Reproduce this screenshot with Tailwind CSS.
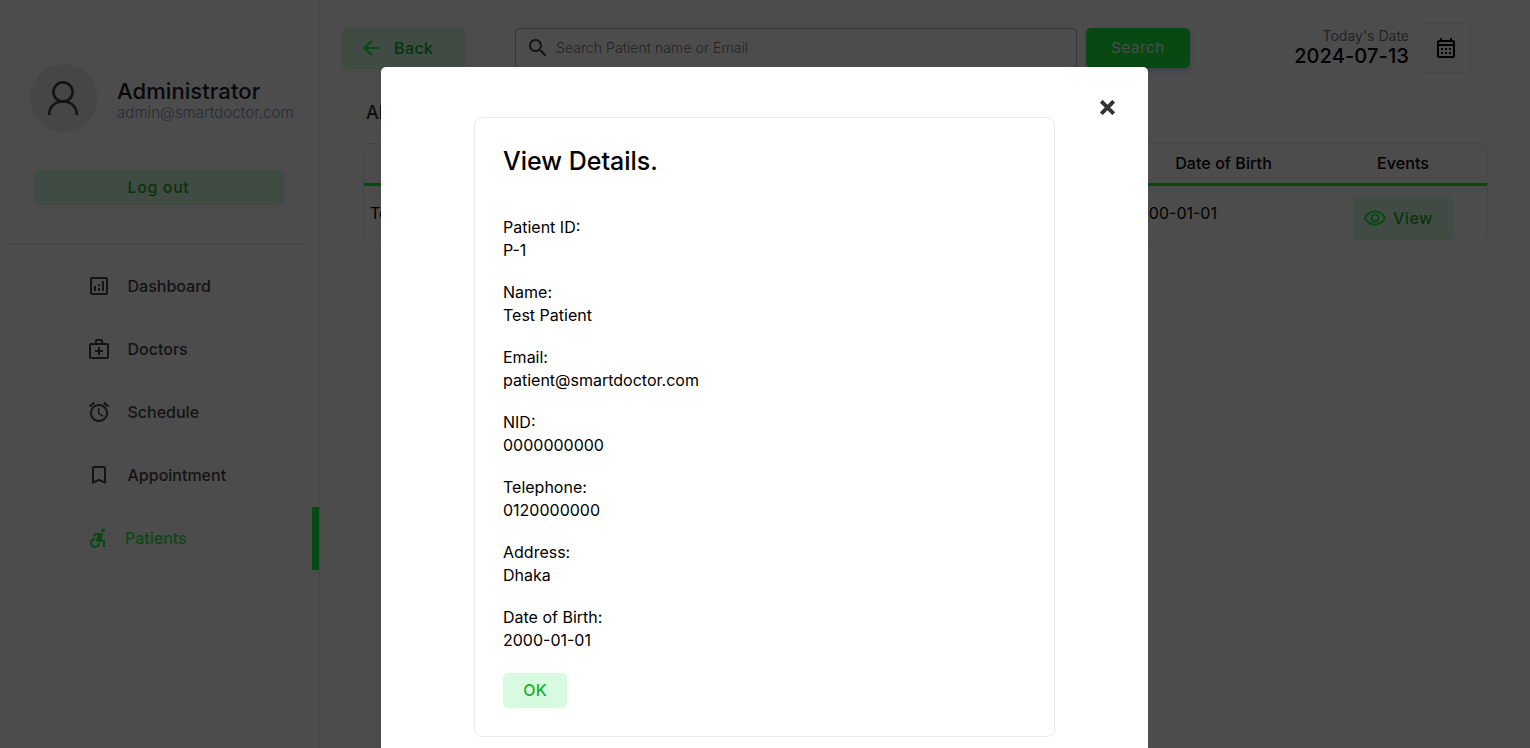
<!DOCTYPE html>
<html lang="en">
<head>
<meta charset="utf-8">
<title>Patients</title>
<script src="https://cdn.jsdelivr.net/npm/@tailwindcss/browser@4"></script>
</head>
<body class="relative h-[748px] w-[1530px] overflow-hidden bg-white font-['Inter','Liberation_Sans',sans-serif] text-base text-black">
<div class="flex h-full">
  <aside class="flex w-[320px] shrink-0 flex-col border-r border-[#ebebeb]">
    <div class="mt-16 ml-[30px] flex h-[68px] items-center">
      <div class="flex h-[68px] w-[67px] shrink-0 items-center justify-center rounded-full bg-[#ebebeb]">
        <svg class="mr-px h-[36px] w-[32px]" viewBox="0 0 32 36" fill="none" stroke="#444" stroke-width="2.6"><circle cx="16" cy="12" r="9.6"/><path d="M2.300 35v-1.200a13.700 12.400 0 0 1 27.400 0V35"/></svg>
      </div>
      <div class="ml-5 flex flex-col pt-[5px]">
        <div class="text-[22px] leading-[24px] font-medium tracking-[0.08px] text-[#161c2d]">Administrator</div>
        <div class="text-[15px] leading-[19px] font-light tracking-[0.08px] text-[#8492a6]">admin@smartdoctor.com</div>
      </div>
    </div>
    <div class="mt-[38px] ml-[33px] flex h-[35px] w-[251px] items-center justify-center rounded-[5px] bg-[#d8fae0] pb-[2px] font-medium tracking-[0.6px] text-[#1bb02a]">Log out</div>
    <div class="mx-2 mt-[39px] mr-[10px] h-px bg-[#ebebeb]"></div>
    <nav class="mt-[9px] flex flex-col font-medium text-[#444]">
      <div class="flex h-[63px] items-center pl-[87px]"><svg class="mr-[16.5px] size-6" viewBox="0 0 24 24" fill="currentColor"><path d="M19 3H5c-1.1 0-2 .9-2 2v14c0 1.100.9 2 2 2h14c1.100 0 2-.9 2-2V5c0-1.100-.9-2-2-2zm0 16H5V5h14v14zM7 12h2v5H7zM15 7h2v10h-2zM11 14h2v3h-2zM11 10h2v2h-2z"/></svg>Dashboard</div>
      <div class="flex h-[63px] items-center pl-[87px]"><svg class="mr-[16.5px] size-6" viewBox="0 0 24 24" fill="currentColor"><path d="M20 6h-4V4c0-1.100-.9-2-2-2h-4c-1.100 0-2 .9-2 2v2H4c-1.100 0-2 .9-2 2v12c0 1.100.9 2 2 2h16c1.100 0 2-.9 2-2V8c0-1.100-.9-2-2-2zM10 4h4v2h-4V4zm10 16H4V8h16v12zM13 10h-2v3H8v2h3v3h2v-3h3v-2h-3z"/></svg>Doctors</div>
      <div class="flex h-[63px] items-center pl-[87px]"><svg class="mr-[16.5px] size-6" viewBox="0 0 24 24" fill="currentColor"><path d="M22 5.720l-4.600-3.860-1.290 1.530 4.600 3.860L22 5.720zM7.880 3.390L6.600 1.860 2 5.710l1.290 1.530 4.590-3.850zM12.500 8H11v6l4.750 2.850.75-1.230-4-2.370V8zM12 4c-4.970 0-9 4.030-9 9s4.020 9 9 9c4.970 0 9-4.030 9-9s-4.030-9-9-9zm0 16c-3.870 0-7-3.130-7-7s3.130-7 7-7 7 3.130 7 7-3.130 7-7 7z"/></svg>Schedule</div>
      <div class="flex h-[63px] items-center pl-[87px]"><svg class="mr-[16.5px] size-6" viewBox="0 0 24 24" fill="currentColor"><path d="M17 3H7c-1.100 0-1.990.9-1.990 2L5 21l7-3 7 3V5c0-1.100-.9-2-2-2zm0 15l-5-2.180L7 18V5h10v13z"/></svg>Appointment</div>
      <div class="flex h-[64px] items-start text-[#18f040]">
        <div class="flex h-[63px] grow items-center pl-[85px]"><svg class="mr-[16px] size-6" viewBox="0 0 24 24" fill="currentColor"><circle cx="18" cy="4.540" r="2"/><path d="M15 17h-2c0 1.650-1.350 3-3 3s-3-1.350-3-3 1.350-3 3-3v-2c-2.760 0-5 2.240-5 5s2.240 5 5 5 5-2.240 5-5zm3-3.500h-1.860l1.670-3.670C18.420 8.500 17.440 7 15.960 7h-5.200c-.81 0-1.540.47-1.870 1.200L8.220 10l1.920.53.65-1.530H13l-1.830 4.100c-.6 1.330.39 2.900 1.850 2.900H18v5h2v-5.500c0-1.100-.9-2-2-2z"/></svg>Patients</div>
        <div class="mt-px h-[63px] w-[7px] shrink-0 bg-[#18f040]"></div>
      </div>
    </nav>
  </aside>
  <main class="flex grow flex-col pl-[21px]">
    <header class="mt-[23px] flex h-[50px] items-start">
      <div class="mt-[5px] flex h-[41px] w-[125px] items-center rounded-[5px] bg-[#d8fae0] pb-px pl-[18px] font-medium tracking-[0.4px] text-[#1bb02a]"><svg class="mr-[11px] size-6" viewBox="0 0 24 24" fill="#18f040"><path d="M20 11H7.830l5.590-5.590L12 4l-8 8 8 8 1.410-1.410L7.830 13H20v-2z"/></svg><span class="-mt-px">Back</span></div>
      <div class="mt-[5px] ml-[49px] flex h-[40px] w-[562px] items-center rounded-[4px] border border-[#b5b5b5] pl-[10px] text-[14px] font-light tracking-[0.07px] text-[#757575]"><svg class="mr-[6px] size-6" viewBox="0 0 24 24" fill="#444"><path d="M15.500 14h-.79l-.28-.27C15.410 12.590 16 11.110 16 9.500 16 5.910 13.090 3 9.500 3S3 5.910 3 9.500 5.910 16 9.500 16c1.610 0 3.090-.59 4.230-1.570l.27.28v.79l5 4.990L20.490 19l-4.990-5zm-6 0C7.010 14 5 11.990 5 9.500S7.010 5 9.500 5 14 7.010 14 9.500 11.990 14 9.500 14z"/></svg><span class="-mt-[2px]">Search Patient name or Email</span></div>
      <div class="mt-[5px] ml-[9px] flex h-[40px] w-[104px] items-center justify-center rounded-[5px] bg-[#18f040] text-[15px] tracking-[0.6px] text-white shadow-[0_3px_5px_rgba(57,108,240,0.3)]">Search</div>
      <div class="ml-auto flex flex-col items-end pt-[4px]">
        <div class="text-[14px] leading-[18px] text-[#777]">Today's Date</div>
        <div class="text-[20px] leading-[22px] font-medium tracking-[0.12px]">2024-07-13</div>
      </div>
      <div class="mr-[59px] ml-3 flex size-[50px] items-center justify-center rounded-[5px] border border-[#ebebeb]"><svg class="size-6" viewBox="0 0 24 24" fill="currentColor"><path d="M19 4h-1V2h-2v2H8V2H6v2H5c-1.110 0-1.990.9-1.990 2L3 20a2 2 0 0 0 2 2h14c1.100 0 2-.9 2-2V6c0-1.100-.9-2-2-2zm0 16H5V10h14v10zm0-12H5V6h14v2zM9 14H7v-2h2v2zm4 0h-2v-2h2v2zm4 0h-2v-2h2v2zm-8 4H7v-2h2v2zm4 0h-2v-2h2v2zm4 0h-2v-2h2v2z"/></svg></div>
    </header>
    <div class="mt-[29px] ml-[25px] text-[18px] leading-[22px] font-medium text-[#313131]">All Patients (1)</div>
    <section class="mt-[19px] ml-[22px] h-[99px] w-[1125px] rounded-[8px] border border-[#ebebeb]">
      <div class="flex h-[42px] items-center border-b-3 border-[#18f040] pb-[2px] font-medium tracking-[0.08px]">
        <div class="w-[760px]"></div>
        <div class="w-[199px] text-center">Date of Birth</div>
        <div class="w-[160px] text-center">Events</div>
      </div>
      <div class="flex">
        <div class="mt-[17px] ml-[6px] w-[737px] leading-[20px]">Test Patient</div>
        <div class="mt-[17px] ml-[22px] w-[224px] leading-[20px]">2000-01-01</div>
        <div class="mt-[11px] flex h-[43px] w-[100px] items-center rounded-[5px] bg-[#d8fae0] pb-px pl-[10px] font-medium tracking-[0.5px] text-[#1bb02a]"><svg class="mr-[6px] size-6" viewBox="0 0 24 24" fill="#18f040"><path d="M12 6.500c3.790 0 7.170 2.130 8.820 5.500-1.650 3.370-5.020 5.500-8.820 5.500S4.830 15.370 3.180 12C4.830 8.630 8.210 6.500 12 6.500m0-2C7 4.500 2.730 7.610 1 12c1.730 4.390 6 7.500 11 7.500s9.270-3.110 11-7.500c-1.730-4.390-6-7.500-11-7.500zm0 5c1.380 0 2.500 1.120 2.500 2.500s-1.120 2.500-2.500 2.500-2.500-1.120-2.500-2.500 1.120-2.500 2.500-2.500m0-2c-2.480 0-4.500 2.020-4.500 4.500s2.020 4.500 4.500 4.500 4.500-2.020 4.500-4.500-2.020-4.500-4.500-4.500z"/></svg><span class="-mt-px">View</span></div>
      </div>
    </section>
  </main>
</div>

<div class="absolute inset-0 flex items-start justify-center overflow-hidden bg-black/70 pr-px">
  <div class="relative mt-[67px] h-[681px] w-[767px] rounded-t-[5px] bg-white pt-[50px]">
    <svg class="absolute top-[33px] left-[719px] size-[15px]" viewBox="0 0 15 15" fill="none" stroke="#333" stroke-width="3.9"><path d="M1.300 1.300 13.700 13.700M13.700 1.300 1.300 13.700"/></svg>
    <div class="ml-[93px] h-[620px] w-[581px] rounded-[8px] border border-[#ebebeb] px-[28px] pt-[28px]">
      <h2 class="text-[25px] leading-[30px] font-medium">View Details.</h2>
      <dl class="mt-[40px] flex flex-col gap-[19px] leading-[23px]">
        <div><dt>Patient ID:</dt><dd>P-1</dd></div>
        <div><dt>Name:</dt><dd>Test Patient</dd></div>
        <div><dt>Email:</dt><dd>patient@smartdoctor.com</dd></div>
        <div><dt>NID:</dt><dd>0000000000</dd></div>
        <div><dt>Telephone:</dt><dd>0120000000</dd></div>
        <div><dt>Address:</dt><dd>Dhaka</dd></div>
        <div><dt>Date of Birth:</dt><dd>2000-01-01</dd></div>
      </dl>
      <button class="mt-[21px] flex h-[35px] w-[64px] items-center justify-center rounded-[5px] bg-[#d8fae0] pb-[2px] font-medium text-[#1bb02a]">OK</button>
    </div>
  </div>
</div>
</body>
</html>
